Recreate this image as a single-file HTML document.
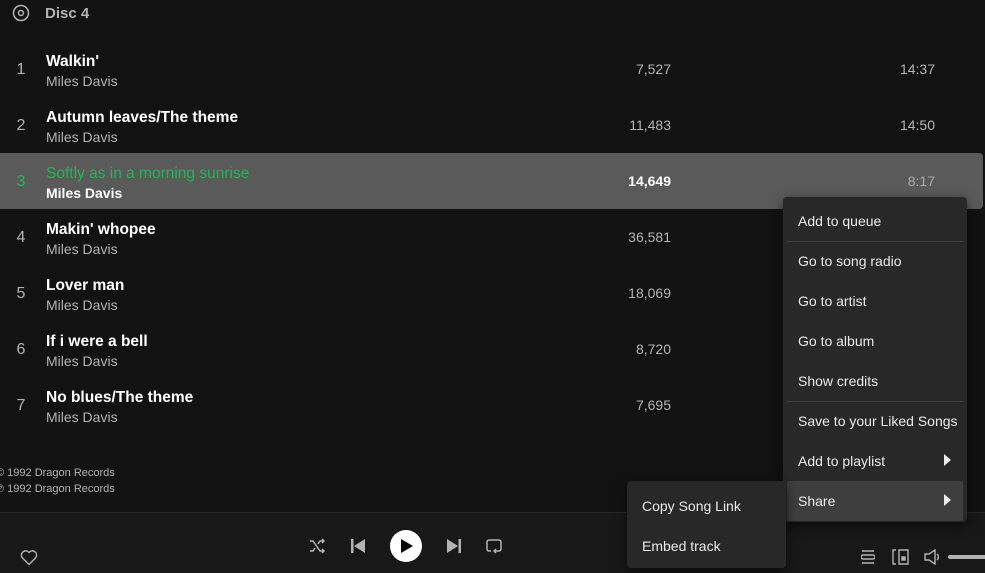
<!DOCTYPE html>
<html><head><meta charset="utf-8"><style>
*{margin:0;padding:0;box-sizing:border-box}
body{width:985px;height:573px;background:#121212;font-family:"Liberation Sans",Arial,sans-serif;position:relative;overflow:hidden;color:#b3b3b3}
.a{position:absolute}
.row{position:absolute;left:0;width:983px;height:56px}
.num{position:absolute;left:14px;top:20px;font-size:16px;width:14px;text-align:center}
.t{position:absolute;left:46px;top:12px;font-size:15.5px;color:#fff;font-weight:bold}
.ar{position:absolute;left:46px;top:32px;font-size:14px}
.pl{position:absolute;right:312px;top:20px;font-size:14px}
.du{position:absolute;right:48px;top:20px;font-size:14px}
.menu{position:absolute;left:783px;top:197px;width:184px;height:325px;background:#282828;border-radius:4px;box-shadow:0 4px 12px rgba(0,0,0,.6)}
.mi{position:absolute;left:15px;font-size:14px;color:#eaeaea}
.sep{position:absolute;left:4px;right:4px;height:1px;background:#3e3e3e}
.sub{position:absolute;left:627px;top:481px;width:159px;height:87px;background:#282828;border-radius:4px;box-shadow:0 4px 12px rgba(0,0,0,.6)}
</style></head><body>
<svg class="a" style="left:12px;top:4px" width="18" height="18" viewBox="0 0 18 18"><circle cx="9" cy="9" r="7.5" fill="none" stroke="#b3b3b3" stroke-width="1.5"/><circle cx="9" cy="9" r="2.5" fill="none" stroke="#b3b3b3" stroke-width="1.5"/></svg>
<div class="a" style="left:45px;top:5px;font-size:15px;font-weight:bold;color:#b3b3b3">Disc 4</div>

<div class="row" style="top:41px"><div class="num">1</div><div class="t">Walkin'</div><div class="ar">Miles Davis</div><div class="pl">7,527</div><div class="du">14:37</div></div>
<div class="row" style="top:97px"><div class="num">2</div><div class="t">Autumn leaves/The theme</div><div class="ar">Miles Davis</div><div class="pl">11,483</div><div class="du">14:50</div></div>
<div class="row" style="top:153px;background:#5a5a5a;border-radius:0 4px 4px 0"><div class="num" style="color:#1db954">3</div><div class="t" style="color:#1db954;font-weight:normal">Softly as in a morning sunrise</div><div class="ar" style="color:#fff;font-weight:bold">Miles Davis</div><div class="pl" style="color:#fff;font-weight:bold">14,649</div><div class="du" style="color:#aaa">8:17</div></div>
<div class="row" style="top:209px"><div class="num">4</div><div class="t">Makin' whopee</div><div class="ar">Miles Davis</div><div class="pl">36,581</div></div>
<div class="row" style="top:265px"><div class="num">5</div><div class="t">Lover man</div><div class="ar">Miles Davis</div><div class="pl">18,069</div></div>
<div class="row" style="top:321px"><div class="num">6</div><div class="t">If i were a bell</div><div class="ar">Miles Davis</div><div class="pl">8,720</div></div>
<div class="row" style="top:377px"><div class="num">7</div><div class="t">No blues/The theme</div><div class="ar">Miles Davis</div><div class="pl">7,695</div></div>

<div class="a" style="left:-4px;top:467px;font-size:11px">© 1992 Dragon Records</div>
<div class="a" style="left:-4px;top:483px;font-size:11px">℗ 1992 Dragon Records</div>

<div class="a" style="left:0;top:512px;width:985px;height:61px;background:#181818;border-top:1px solid #282828"></div>
<svg class="a" style="left:20px;top:549px" width="18" height="17" viewBox="0 0 18 17"><path d="M9 15.5 L2.3 8.8 A3.9 3.9 0 0 1 9 3.5 A3.9 3.9 0 0 1 15.7 8.8 Z" fill="none" stroke="#b3b3b3" stroke-width="1.4"/></svg>
<svg class="a" style="left:308px;top:537px" width="18" height="18" viewBox="0 0 18 18" fill="none" stroke="#b3b3b3" stroke-width="1.5"><path d="M2 4h3l7 10h4M2 14h3l2-3M10 7l2-3h4M14 2l2 2-2 2M14 12l2 2-2 2"/></svg>
<svg class="a" style="left:350px;top:538px" width="16" height="16" viewBox="0 0 16 16" fill="#b3b3b3"><rect x="1" y="1" width="2.5" height="14"/><path d="M15 1v14L4 8z"/></svg>
<div class="a" style="left:390px;top:530px;width:32px;height:32px;border-radius:50%;background:#fff"></div>
<svg class="a" style="left:400px;top:539px" width="14" height="14" viewBox="0 0 14 14"><path d="M1 0v14l12-7z" fill="#000"/></svg>
<svg class="a" style="left:446px;top:538px" width="16" height="16" viewBox="0 0 16 16" fill="#b3b3b3"><rect x="12.5" y="1" width="2.5" height="14"/><path d="M1 1v14l11-7z"/></svg>
<svg class="a" style="left:485px;top:538px" width="18" height="18" viewBox="0 0 18 18" fill="none" stroke="#b3b3b3" stroke-width="1.5"><path d="M6 13H4a2 2 0 0 1-2-2V4a2 2 0 0 1 2-2h10a2 2 0 0 1 2 2v7a2 2 0 0 1-2 2H9M11 11l-2 2 2 2"/></svg>
<svg class="a" style="left:861px;top:550px" width="14" height="14" viewBox="0 0 14 14" fill="none" stroke="#b3b3b3" stroke-width="1.4"><path d="M1 1h12M1 13h12M2 5h10a1.5 1.5 0 0 1 0 4H2a1.5 1.5 0 0 1 0-4z"/></svg>
<svg class="a" style="left:892px;top:549px" width="17" height="16" viewBox="0 0 17 16" fill="none" stroke="#b3b3b3" stroke-width="1.4"><path d="M4 1H1v14h3M7 1h9v14H7z"/><rect x="10" y="8" width="3" height="3" fill="#b3b3b3"/></svg>
<svg class="a" style="left:924px;top:549px" width="18" height="16" viewBox="0 0 18 16" fill="none" stroke="#b3b3b3" stroke-width="1.4"><path d="M1 5h4l6-4v14l-6-4H1zM13 5a4 4 0 0 1 0 6"/></svg>
<div class="a" style="left:948px;top:555px;width:40px;height:4px;border-radius:2px;background:#b3b3b3"></div>

<div class="menu">
<div class="mi" style="top:16px">Add to queue</div>
<div class="sep" style="top:44px"></div>
<div class="mi" style="top:56px">Go to song radio</div>
<div class="mi" style="top:96px">Go to artist</div>
<div class="mi" style="top:136px">Go to album</div>
<div class="mi" style="top:176px">Show credits</div>
<div class="sep" style="top:204px"></div>
<div class="mi" style="top:216px">Save to your Liked Songs</div>
<div class="mi" style="top:256px">Add to playlist</div>
<svg class="a" style="left:161px;top:257px" width="7" height="12" viewBox="0 0 7 12"><path d="M0 0l7 6-7 6z" fill="#eaeaea"/></svg>
<div class="a" style="left:4px;top:284px;width:176px;height:40px;background:#3e3e3e;border-radius:2px"></div>
<div class="mi" style="top:296px">Share</div>
<svg class="a" style="left:161px;top:297px" width="7" height="12" viewBox="0 0 7 12"><path d="M0 0l7 6-7 6z" fill="#eaeaea"/></svg>
</div>
<div class="sub">
<div class="mi" style="top:17px">Copy Song Link</div>
<div class="mi" style="top:57px">Embed track</div>
</div>
</body></html>
